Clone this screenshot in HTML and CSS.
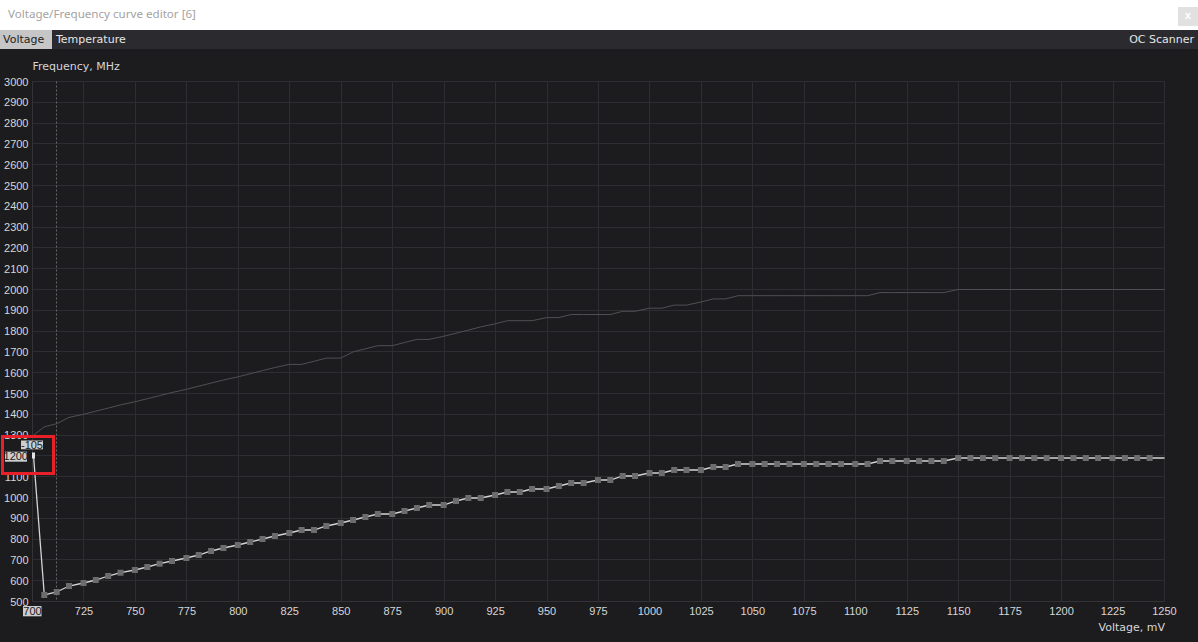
FILE: index.html
```html
<!DOCTYPE html>
<html>
<head>
<meta charset="utf-8">
<title>Voltage/Frequency curve editor</title>
<link rel="stylesheet" href="styles.css">
</head>
<body>
<div class="window">
  <div class="titlebar">
    <span class="title">Voltage/Frequency curve editor [6]</span>
    <span class="close">x</span>
  </div>
  <div class="tabs">
    <span class="tab active">Voltage</span>
    <span class="tab">Temperature</span>
    <span class="spacer"></span>
    <span class="tab right">OC Scanner</span>
  </div>
  <div class="chart">
    <svg id="chart" class="plot" width="1198" height="593" viewBox="0 49 1198 593" xmlns="http://www.w3.org/2000/svg"></svg>
  </div>
</div>
<script src="chart.js"></script>
</body>
</html>
```

FILE: styles.css
```css
html, body {
  margin: 0;
  padding: 0;
  background: #1c1c1f;
}
body {
  width: 1198px;
  height: 642px;
  overflow: hidden;
  font-family: "DejaVu Sans", sans-serif;
}
.window {
  display: flex;
  flex-direction: column;
  height: 642px;
}
.titlebar {
  height: 30px;
  background: #ffffff;
  display: flex;
  align-items: flex-start;
}
.title {
  font-family: "Noto Sans", sans-serif;
  font-size: 11.6px;
  color: #a3a3a3;
  margin-left: 8px;
  margin-top: 6px;
  line-height: 16px;
  flex: 1;
}
.close {
  width: 20px;
  height: 19px;
  margin-top: 7px;
  background: #e1e1e1;
  color: #fbfbfb;
  font-size: 10px;
  font-weight: bold;
  line-height: 18px;
  text-align: center;
}
.tabs {
  height: 19px;
  background: #2b2b2f;
  display: flex;
  align-items: stretch;
  font-size: 11px;
  line-height: 19px;
  color: #e6e6e6;
}
.tab {
  padding: 0 4px 0 4px;
}
.tab.active {
  background: #c6c6c6;
  color: #1e1e1e;
  width: 45px;
  padding: 0 4px 0 3px;
}
.tab.right {
  padding-right: 4px;
}
.spacer {
  flex: 1;
}
.chart {
  flex: 1;
  background: #1c1c1f;
}
.plot {
  display: block;
}
.grid line {
  stroke: #2e2e32;
  stroke-width: 1;
}
.axis {
  stroke: #333337;
  stroke-width: 1;
}
.dash {
  stroke: #66666a;
  stroke-width: 1;
  stroke-dasharray: 2 2;
}
.num {
  font-family: "Liberation Sans", sans-serif;
  font-size: 11px;
  fill: #d6d6d6;
}
.lbl {
  font-family: "DejaVu Sans", sans-serif;
  font-size: 11px;
  fill: #d6d6d6;
}
.upper {
  fill: none;
  stroke: #505054;
  stroke-width: 1;
}
.lower {
  fill: none;
  stroke: #d4d4d4;
  stroke-width: 1.3;
}
.pt {
  fill: #6c6c6c;
}
.sel {
  fill: #e4e4e4;
}
.hl-bg {
  fill: #cdcdcd;
}
.hl-text {
  fill: #1c1c1c;
}
.redbox {
  fill: none;
  stroke: #e8202a;
  stroke-width: 3;
}
```

FILE: chart.js
```js
(function () {
  var NS = 'http://www.w3.org/2000/svg';
  var svg = document.getElementById('chart');
  function el(tag, attrs, parent, text) {
    var e = document.createElementNS(NS, tag);
    for (var k in attrs) e.setAttribute(k, attrs[k]);
    if (text !== undefined) e.textContent = text;
    (parent || svg).appendChild(e);
    return e;
  }
  var L = 32.5, R = 1164.5, T = 81.5, B = 601.5;
  function X(v) { return L + (v - 700) * (R - L) / 550; }
  function Y(f) { return T + (3000 - f) * (B - T) / 2500; }
  function snap(p) { return Math.floor(p) + 0.5; }

  // grid
  var grid = el('g', { 'class': 'grid' });
  for (var v = 725; v <= 1250; v += 25) {
    var x = snap(X(v));
    el('line', { x1: x, y1: T, x2: x, y2: B }, grid);
  }
  for (var f = 600; f <= 3000; f += 100) {
    var y = snap(Y(f));
    el('line', { x1: L, y1: y, x2: R, y2: y }, grid);
  }
  el('line', { x1: L, y1: T, x2: L, y2: B, 'class': 'axis' });
  el('line', { x1: L, y1: B, x2: R, y2: B, 'class': 'axis' });

  // dashed marker line
  el('line', { x1: 56.5, y1: T, x2: 56.5, y2: B, 'class': 'dash' });

  // labels
  for (var f2 = 500; f2 <= 3000; f2 += 100) {
    if (f2 === 1200) continue;
    el('text', { x: 28.5, y: Y(f2) + 4, 'text-anchor': 'end', 'class': 'num' }, null, String(f2));
  }
  for (var v2 = 725; v2 <= 1250; v2 += 25) {
    el('text', { x: X(v2), y: 615, 'text-anchor': 'middle', 'class': 'num' }, null, String(v2));
  }
  el('text', { x: 32.5, y: 69.5, 'class': 'lbl' }, null, 'Frequency, MHz');
  el('text', { x: 1165, y: 630.5, 'text-anchor': 'end', 'class': 'lbl' }, null, 'Voltage, mV');

  // upper (gray) curve
  var anchors = [
    [700, 1300], [706.6, 1344], [711.8, 1353], [717.7, 1384], [724.7, 1397],
    [825, 1636], [837, 1653], [850, 1677], [867, 1725], [875, 1725], [883.4, 1748],
    [900.4, 1772], [911, 1799], [930, 1849], [938, 1849], [961, 1877], [974, 1887],
    [982, 1887], [998, 1905], [1006.8, 1917], [1024, 1940], [1030.6, 1953],
    [1042, 1967], [1107, 1967], [1111, 1978], [1146, 1983], [1151, 1998], [1250, 1998]
  ];
  function interp(v) {
    for (var i = 1; i < anchors.length; i++) {
      if (v <= anchors[i][0]) {
        var a = anchors[i - 1], b = anchors[i];
        return a[1] + (b[1] - a[1]) * (v - a[0]) / (b[0] - a[0]);
      }
    }
    return anchors[anchors.length - 1][1];
  }
  var up = [];
  for (var k = 0; k <= 88; k++) {
    var vv = 700 + Math.min(550, Math.floor(6.25 * k));
    var fq = interp(vv);
    fq = 2000 - Math.round((2000 - fq) / 15) * 15;
    var xx = k === 0 ? L : (k === 88 ? R : X(vv) - 0.5);
    up.push(xx.toFixed(1) + ',' + Y(fq).toFixed(1));
  }
  el('polyline', { points: up.join(' '), 'class': 'upper' });

  // lower (white) curve with points
  var ly = [455.5,
    595, 592, 586, 583, 580, 576, 572.7, 570, 567, 563.7,
    561, 558, 555, 551, 548, 545, 542, 539, 536, 533,
    530, 530, 526, 523, 520, 517, 514, 514, 511, 508,
    505, 505, 501, 498, 498, 495, 492, 492, 489, 489,
    486, 483, 483, 480, 480, 476, 476, 473, 473, 470,
    470, 470, 467, 467];
  while (ly.length < 66) ly.push(464);
  while (ly.length < 72) ly.push(461);
  while (ly.length < 89) ly.push(458);
  var lp = [];
  var pts = [];
  for (var j = 0; j <= 88; j++) {
    var vj = 700 + Math.min(550, Math.floor(6.25 * j));
    var xj = j === 0 ? 33.5 : (j === 88 ? R : X(vj) - 0.5);
    lp.push(xj.toFixed(1) + ',' + ly[j]);
    if (j >= 1 && j <= 87) pts.push([xj, ly[j]]);
  }
  el('polyline', { points: lp.join(' '), 'class': 'lower' });
  var pg = el('g', {});
  pts.forEach(function (p) {
    el('rect', { x: (p[0] - 3).toFixed(1), y: (p[1] - 3).toFixed(1), width: 6, height: 6, 'class': 'pt' }, pg);
  });
  el('rect', { x: 32, y: 452.5, width: 3, height: 6, 'class': 'sel' });

  // highlighted labels
  el('rect', { x: 5, y: 451.7, width: 22, height: 10, 'class': 'hl-bg' });
  el('text', { x: 28, y: 459.5, 'text-anchor': 'end', 'class': 'num hl-text' }, null, '1200');
  el('rect', { x: 23, y: 606, width: 18.5, height: 10.3, 'class': 'hl-bg' });
  el('text', { x: 32.5, y: 615, 'text-anchor': 'middle', 'class': 'num hl-text' }, null, '700');
  el('rect', { x: 21, y: 440.5, width: 22, height: 8.8, 'class': 'hl-bg' });
  el('text', { x: 43, y: 449, 'text-anchor': 'end', 'class': 'num hl-text' }, null, '-105');

  // red annotation box
  el('rect', { x: 2.5, y: 436.5, width: 51, height: 37, 'class': 'redbox' });
})();
```
